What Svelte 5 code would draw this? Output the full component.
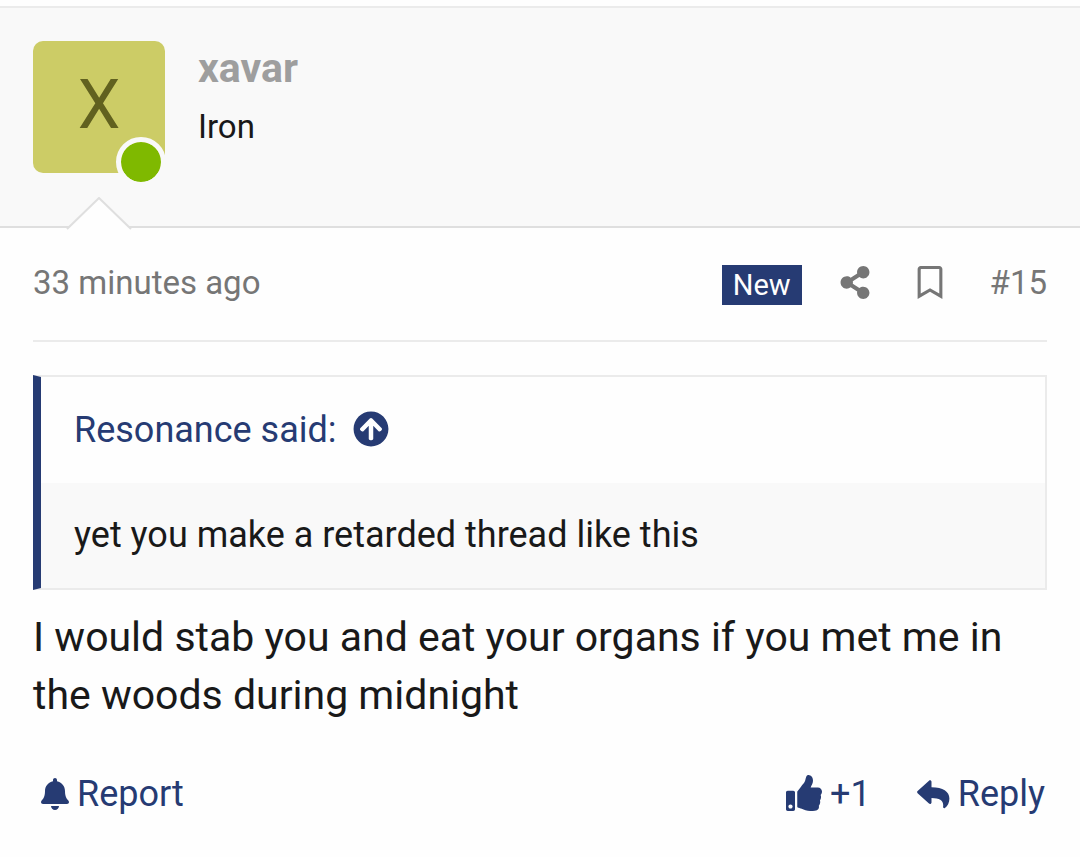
<script>
  const author = { name: 'xavar', rank: 'Iron', initial: 'X' };
</script>

<article class="post">
  <header class="user">
    <div class="avatar">
      <a href="#member">{author.initial}</a>
      <span class="online"></span>
    </div>
    <div class="who">
      <h4><a href="#member">{author.name}</a></h4>
      <p>{author.rank}</p>
    </div>
    <svg class="notch" viewBox="0 0 66 33" aria-hidden="true">
      <path d="M0 33L2 31 33 1 64 31 66 33z" fill="#fefefe" />
      <path d="M1 32L33 1l32 31" fill="none" stroke="#dfdfdf" stroke-width="2" />
    </svg>
  </header>

  <div class="main">
    <div class="meta">
      <a class="time" href="#post-15"><time>33 minutes ago</time></a>
      <ul>
        <li><span class="new">New</span></li>
        <li>
          <a href="#share" aria-label="Share">
            <svg class="share" viewBox="0 0 448 512"><path d="M352 320c-22.608 0-43.387 7.819-59.79 20.895l-102.486-64.054a96.551 96.551 0 0 0 0-41.683l102.486-64.054C308.613 184.181 329.392 192 352 192c53.019 0 96-42.981 96-96S405.019 0 352 0s-96 42.981-96 96c0 7.158.79 14.13 2.276 20.841L155.79 180.895C139.387 167.819 118.608 160 96 160c-53.019 0-96 42.981-96 96s42.981 96 96 96c22.608 0 43.387-7.819 59.79-20.895l102.486 64.054A96.301 96.301 0 0 0 256 416c0 53.019 42.981 96 96 96s96-42.981 96-96-42.981-96-96-96z" /></svg>
          </a>
        </li>
        <li>
          <a href="#bookmark" aria-label="Bookmark">
            <svg class="bookmark" viewBox="0 0 384 512"><path d="M336 0H48C21.49 0 0 21.49 0 48v464l192-112 192 112V48c0-26.51-21.49-48-48-48zm0 428.43l-144-84-144 84V54a6 6 0 0 1 6-6h276c3.314 0 6 2.683 6 5.996V428.43z" /></svg>
          </a>
        </li>
        <li><a href="#post-15">#15</a></li>
      </ul>
    </div>

    <blockquote>
      <div class="said">
        <a href="#quoted">Resonance said:
          <svg viewBox="0 0 512 512" aria-hidden="true"><path d="M8 256C8 119 119 8 256 8s248 111 248 248-111 248-248 248S8 393 8 256zm143.6 28.9l72.4-75.5V392c0 13.3 10.7 24 24 24h16c13.3 0 24-10.7 24-24V209.4l72.4 75.5c9.3 9.7 24.8 9.9 34.3.4l10.9-11c9.4-9.4 9.4-24.6 0-33.9L273 107.7c-9.4-9.4-24.6-9.4-33.9 0L106.3 240.4c-9.4 9.4-9.4 24.6 0 33.9l10.9 11c9.6 9.5 25.1 9.3 34.4-.4z" /></svg>
        </a>
      </div>
      <div class="quoted">yet you make a retarded thread like this</div>
    </blockquote>

    <p class="body">I would stab you and eat your organs if you met me in the woods during midnight</p>

    <footer>
      <a href="#report">
        <svg class="bell" viewBox="0 0 448 512" aria-hidden="true"><path d="M224 512c35.32 0 63.97-28.65 63.97-64H160.03c0 35.35 28.65 64 63.97 64zm215.39-149.71c-19.32-20.76-55.47-51.99-55.47-154.29 0-77.7-54.48-139.9-127.94-155.16V32c0-17.67-14.32-32-31.98-32s-31.98 14.33-31.98 32v20.84C118.56 68.1 64.08 130.3 64.08 208c0 102.3-36.15 133.53-55.47 154.29-6 6.45-8.66 14.16-8.61 21.71.11 16.4 12.98 32 32.1 32h383.8c19.12 0 32-15.6 32.1-32 .05-7.55-2.61-15.27-8.61-21.71z" /></svg>
        Report
      </a>
      <div class="actions">
        <a href="#react">
          <svg class="thumb" viewBox="0 0 512 512" aria-hidden="true"><path d="M104 224H24c-13.255 0-24 10.745-24 24v240c0 13.255 10.745 24 24 24h80c13.255 0 24-10.745 24-24V248c0-13.255-10.745-24-24-24zM64 478c-16.600 0-30-13.400-30-30s13.400-30 30-30 30 13.400 30 30-13.400 30-30 30zM384 81.452c0 42.416-25.97 66.208-33.277 94.548h101.723c33.397 0 59.397 27.746 59.553 58.098.084 17.938-7.546 37.249-19.439 49.197l-.11.11c9.836 23.337 8.237 56.037-9.308 79.469 8.681 25.895-.069 57.704-16.382 74.757 4.298 17.598 2.244 32.575-6.148 44.632C440.202 511.587 389.616 512 346.839 512l-2.845-.001c-48.287-.017-87.806-17.598-119.56-31.725-15.957-7.099-36.821-15.887-52.651-16.178-6.54-.12-11.783-5.457-11.783-11.998v-213.77c0-3.2 1.282-6.271 3.558-8.521 39.614-39.144 56.648-80.587 89.117-113.111 14.804-14.832 20.188-37.236 25.393-58.902C282.515 39.293 291.817 0 312 0c24 0 72 8 72 81.452z" /></svg>
          +1
        </a>
        <a href="#reply">
          <svg class="reply" viewBox="0 0 33 29" aria-hidden="true"><path d="M.6 10.900L12 .7c1-.9 2.500-.2 2.500 1.100v5.400C26 7.200 32.400 11.500 32.400 18.500c0 4-1.600 7.300-4.500 9.500-.9.600-2-.1-1.800-1.200.9-6-3-8.600-11.600-8.700v4.300c0 1.300-1.500 2-2.500 1.100L.6 13.200c-.7-.6-.7-1.700 0-2.300z" /></svg>
          Reply
        </a>
      </div>
    </footer>
  </div>
</article>

<style>
  :global(body) {
    margin: 0;
    background: #fefefe;
    font-family: Roboto, 'Liberation Sans', sans-serif;
    color: #191919;
  }
  a { color: inherit; text-decoration: none; }
  svg { display: block; flex: none; fill: currentColor; }
  .post { margin-top: 6px; border-top: 2px solid #ebebeb; }
  .user {
    position: relative;
    display: flex;
    gap: 33px;
    padding: 33px 33px 53px;
    background: #f9f9f9;
    border-bottom: 2px solid #dfdfdf;
  }
  .avatar { position: relative; }
  .avatar a {
    display: block;
    width: 132px;
    height: 132px;
    border-radius: 10px;
    background: #cccc66;
    color: #61611f;
    font-size: 68px;
    line-height: 128px;
    text-align: center;
  }
  .online {
    position: absolute;
    right: -1px;
    bottom: -14px;
    box-sizing: border-box;
    width: 50px;
    height: 50px;
    border: 5px solid #f9f9f9;
    border-radius: 50%;
    background: #7fb900;
    background-clip: padding-box;
  }
  .who { padding-top: 3px; }
  h4 { margin: 0; font-size: 41px; line-height: 48px; color: #9e9e9e; }
  .who p { margin: 11px 0 0; font-size: 33px; line-height: 48px; }
  .notch { position: absolute; left: 66px; bottom: -4px; width: 66px; height: 33px; }
  .main { padding: 0 33px; }
  .meta {
    display: flex;
    justify-content: space-between;
    align-items: center;
    padding: 33px 0 35px;
    border-bottom: 2px solid #ebebeb;
    color: #767676;
    font-size: 33px;
    line-height: 40px;
  }
  ul {
    display: flex;
    align-items: center;
    margin: 0;
    padding: 0;
    list-style: none;
  }
  li { margin-left: 47px; }
  li:nth-child(2) { margin-left: 38px; }
  .new {
    display: block;
    margin-top: 4px;
    padding: 0 11px;
    background: #263b73;
    color: #fefefe;
    font-size: 29px;
    line-height: 40px;
  }
  .share { width: 30px; height: 33px; margin-bottom: 2px; }
  .bookmark { width: 26px; height: 33px; margin-bottom: 2px; }
  blockquote {
    margin: 33px 0 0;
    border: 2px solid #ebebeb;
    border-left: 8px solid #263b73;
    font-size: 36px;
  }
  .said { padding: 28px 33px; color: #263b73; line-height: 50px; }
  .said a { display: inline-flex; align-items: center; gap: 16px; }
  .said svg { width: 36px; height: 36px; margin-bottom: 2px; }
  .quoted { padding: 27px 33px 28px; background: #f9f9f9; line-height: 50px; }
  .body { margin: 18px 0 0; font-size: 41px; line-height: 58px; }
  footer {
    display: flex;
    justify-content: space-between;
    align-items: center;
    padding: 45px 2px 38px 8px;
    color: #263b73;
    font-size: 36px;
    line-height: 50px;
  }
  footer a { display: flex; align-items: center; gap: 8px; }
  .actions { display: flex; gap: 46px; }
  .bell { width: 28px; height: 32px; }
  .thumb { width: 36px; height: 36px; margin-bottom: 2px; }
  .reply { width: 33px; height: 29px; }
</style>
